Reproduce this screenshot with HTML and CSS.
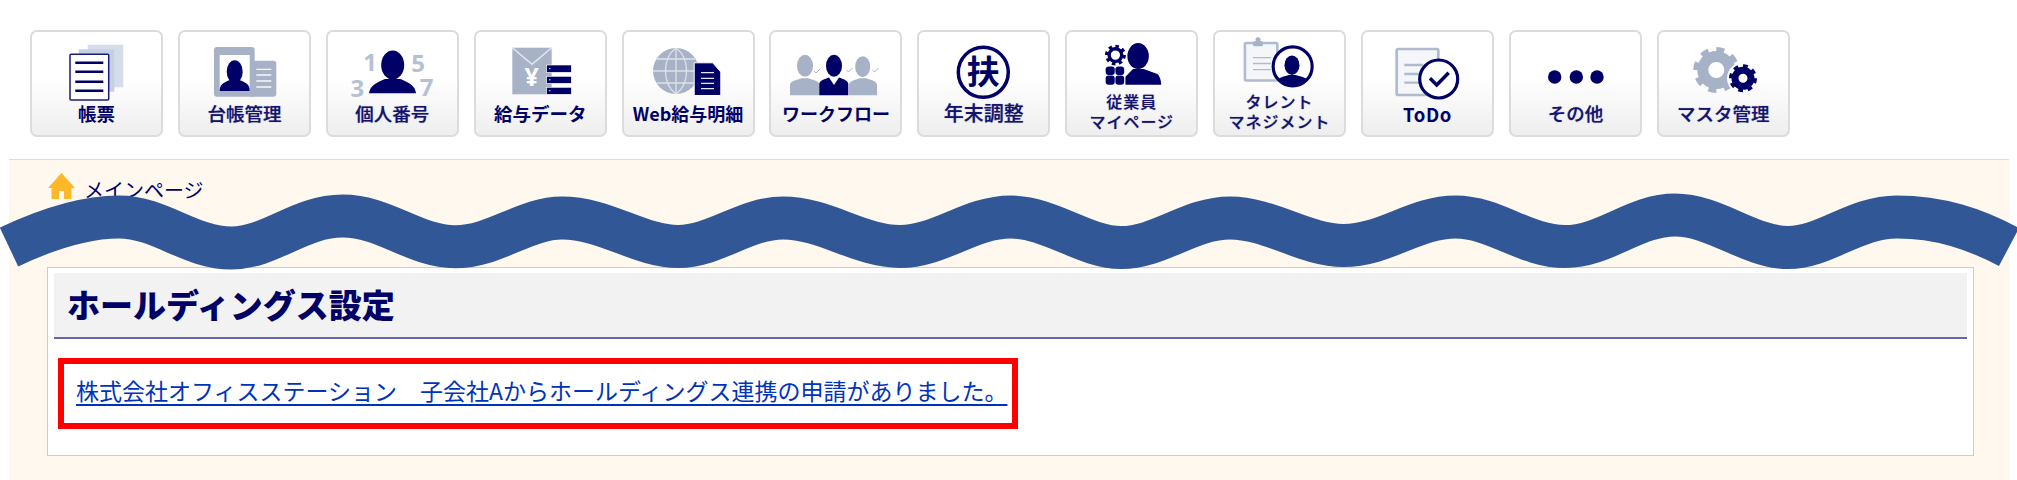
FILE: index.html
```html
<!DOCTYPE html>
<html lang="ja">
<head>
<meta charset="utf-8">
<title>ホールディングス設定</title>
<link rel="stylesheet" href="styles.css">
</head>
<body>
<nav class="toolbar">
  <a class="tile">
    <svg class="icon" viewBox="0 0 129 70">
      <rect class="pale" x="55.7" y="12.7" width="35.6" height="42.6"/>
      <rect class="pale2" x="46.7" y="17.3" width="35.6" height="42.4"/>
      <rect class="sheet" x="38" y="22.3" width="38.7" height="45.7" rx="1"/>
      <path class="rule" d="M43.3 30.7H71.3M43.3 39.7H71.3M43.3 49.7H71.3M43.3 58.7H71.3"/>
    </svg>
    <span class="label heavy">帳票</span>
  </a>
  <a class="tile">
    <svg class="icon" viewBox="0 0 129 70">
      <rect class="grey" x="34" y="15" width="40.7" height="49.7" rx="3"/>
      <path class="grey" d="M70 28.7H93.3a3 3 0 0 1 3 3V61.7a3 3 0 0 1-3 3H70Z"/>
      <rect class="white" x="39.7" y="23" width="30" height="36"/>
      <ellipse class="navy" cx="54.7" cy="39.7" rx="8" ry="11.5"/>
      <path class="navy" d="M39.7 59C39.7 53 42 51 50 48H59.4C67.4 51 69.7 53 69.7 59Z"/>
      <path class="whiteline" d="M76.3 37.3H91.3M76.3 43H91.3M76.3 49H91.3M76.3 55H91.3"/>
    </svg>
    <span class="label">台帳管理</span>
  </a>
  <a class="tile">
    <svg class="icon" viewBox="0 0 129 70">
      <text class="digit" x="42" y="38.7">1</text>
      <text class="digit" x="90" y="40">5</text>
      <text class="digit" x="29.3" y="65">3</text>
      <text class="digit" x="98.7" y="64">7</text>
      <ellipse class="navy" cx="64.7" cy="33" rx="11.5" ry="14.5"/>
      <path class="navy" d="M41 61.3C42 54 47 51.5 57 47H72.4C82.4 51.5 87 54 88 61.3Z"/>
    </svg>
    <span class="label">個人番号</span>
  </a>
  <a class="tile">
    <svg class="icon" viewBox="0 0 129 70">
      <rect class="grey" x="36.3" y="15.7" width="39.4" height="46.6"/>
      <path class="envline" d="M36.3 15.7L56 32.3L75.7 15.7"/>
      <text class="yen" x="55.7" y="54">¥</text>
      <rect class="bar" x="70.7" y="33" width="24.6" height="7.3"/>
      <rect class="bar" x="70.7" y="44.3" width="24.6" height="7"/>
      <rect class="bar" x="70.7" y="55.3" width="24.6" height="7"/>
      <path class="whiteline thin" d="M73 36.6H74.5M73 47.8H74.5M73 58.8H74.5"/>
    </svg>
    <span class="label heavy wide">給与データ</span>
  </a>
  <a class="tile">
    <svg class="icon" viewBox="0 0 129 70">
      <circle class="grey" cx="52" cy="39" r="23"/>
      <path class="globeline" d="M29 39H75M33 27H71M33 51H71M52 16V62M52 16C38 26 38 52 52 62M52 16C66 26 66 52 52 62"/>
      <path class="navy outlined" d="M70.2 30.8H88.7L96.8 40V63.5H70.2Z"/>
      <path class="whiteline" d="M77 40.7H90M77 46.3H90M77 51.3H90M77 56.7H90"/>
    </svg>
    <span class="label small heavy">Web給与明細</span>
  </a>
  <a class="tile">
    <svg class="icon" viewBox="0 0 129 70">
      <ellipse class="grey" cx="34" cy="33.7" rx="8" ry="11"/>
      <path class="grey" d="M19 63.3V53C19 49 26 48 31 46.3H37C42 48 48.500 49 48.500 53V63.3Z"/>
      <ellipse class="grey" cx="91.7" cy="34.7" rx="7.500" ry="10.500"/>
      <path class="grey" d="M78 63.3V53C78 49 84 48 89 46.3H95C100 48 106 49 106 53V63.3Z"/>
      <ellipse class="navy" cx="63" cy="33.7" rx="8" ry="11"/>
      <path class="navy" d="M48.3 63.3V52C48.3 48.5 54 47 58 45.5L63 53L68 45.5C72 47 77.3 48.5 77.3 52V63.3Z"/>
      <path class="tick" d="M43 39L45 41L49 37M75.5 38L77.5 40L81.5 36M101.5 38L103.5 40L107.5 36"/>
    </svg>
    <span class="label small heavy">ワークフロー</span>
  </a>
  <a class="tile">
    <svg class="icon" viewBox="0 0 129 70">
      <circle class="ring" cx="64.3" cy="40.3" r="25"/>
      <text class="seal" x="64.3" y="52">扶</text>
    </svg>
    <span class="label large">年末調整</span>
  </a>
  <a class="tile">
    <svg class="icon short" viewBox="0 0 129 60">
      <circle class="gearring" cx="48" cy="23.7" r="6.5"/>
      <circle class="gearteeth" cx="48" cy="23.7" r="9" pathLength="80" stroke-dasharray="5 5"/>
      <rect class="navy" x="38" y="35.3" width="9.3" height="8.7" rx="3"/>
      <rect class="navy" x="48" y="35.3" width="9" height="8.7" rx="3"/>
      <rect class="navy" x="38" y="44.7" width="9.3" height="9.3" rx="3"/>
      <rect class="navy" x="48" y="44.7" width="9" height="9.3" rx="3"/>
      <ellipse class="navy" cx="71.3" cy="24.7" rx="11" ry="13.3"/>
      <path class="navy" d="M58.3 54V46L66 38H77L91 43C93.5 45 95 50 95 54Z"/>
    </svg>
    <span class="label two">従業員<br>マイページ</span>
  </a>
  <a class="tile">
    <svg class="icon short" viewBox="0 0 129 60">
      <rect class="board" x="29" y="11.3" width="33.3" height="38.4" rx="1.5"/>
      <rect class="grey" x="37.5" y="9.5" width="10" height="5" rx="1"/>
      <circle class="grey" cx="42.5" cy="8" r="2.6"/>
      <path class="boardline" d="M37.3 26.3H55.7M37.3 32.3H55.7M37.3 38.7H55.7"/>
      <circle class="disc" cx="78" cy="35.3" r="20"/>
      <ellipse class="navy" cx="77.3" cy="34" rx="7.7" ry="10"/>
      <path class="navy" d="M63.7 48C66 46 71 45 74 44H81C84 45 89 46 92.300 48C88 52.300 83.500 54.300 78 54.300C72.500 54.300 67.500 52.300 63.700 48Z"/>
    </svg>
    <span class="label two">タレント<br>マネジメント</span>
  </a>
  <a class="tile">
    <svg class="icon" viewBox="0 0 129 70">
      <rect class="board" x="33.700" y="17" width="41.600" height="46" rx="1.500"/>
      <path class="boardline wide" d="M41.300 33H60M41.300 42H60M41.300 50.700H60"/>
      <circle class="disc" cx="75.700" cy="47" r="19"/>
      <path class="check" d="M67 46.300L73.700 53L85.700 40.700"/>
    </svg>
    <span class="label heavy spaced">ToDo</span>
  </a>
  <a class="tile">
    <svg class="icon" viewBox="0 0 129 70">
      <circle class="navy" cx="43.700" cy="45" r="6.700"/>
      <circle class="navy" cx="65.300" cy="45" r="6.700"/>
      <circle class="navy" cx="86" cy="45" r="6.700"/>
    </svg>
    <span class="label">その他</span>
  </a>
  <a class="tile">
    <svg class="icon" viewBox="0 0 129 70">
      <circle class="gearbig" cx="57.300" cy="38" r="13.500"/>
      <circle class="gearbigteeth" cx="57.300" cy="38" r="19.500" pathLength="80" stroke-dasharray="5 5"/>
      <circle class="halo" cx="84" cy="46.300" r="16"/>
      <circle class="gearsmall" cx="84" cy="46.300" r="8"/>
      <circle class="gearsmallteeth" cx="84" cy="46.300" r="12" pathLength="80" stroke-dasharray="5 5"/>
    </svg>
    <span class="label">マスタ管理</span>
  </a>
</nav>

<main class="content">
  <div class="crumb">
    <svg class="home" viewBox="0 0 27 26">
      <path class="homefill" d="M13.500 0L27 15H23.500V26H16V18H11V26H3.500V15H0Z"/>
    </svg>
    <span class="crumbtext">メインページ</span>
  </div>
  <section class="panel">
    <h1 class="title">ホールディングス設定</h1>
    <div class="notice">
      <a class="notice-link" href="#">株式会社オフィスステーション　子会社Aからホールディングス連携の申請がありました。</a>
    </div>
  </section>
</main>

<svg class="wave" viewBox="0 0 2017 480" width="2017" height="480">
  <path class="wavepath" d="M9 247C45 230 85 217 119 217C160 217 190 248 231.500 248C270 248 300 216 342.500 216C385 216 415 246.700 455 246.700C495 246.700 525 218 562 218C605 218 640 246.500 678 246.500C715 246.500 745 218 783 218C825 218 860 246.500 900 246.500C940 246.500 970 217 1010.700 217C1050 217 1085 247.500 1121 247.500C1160 247.500 1190 218 1230 218C1270 218 1305 245.500 1343.400 245.500C1385 245.500 1415 217 1455.500 217C1495 217 1525 246.500 1565 246.500C1605 246.500 1635 215 1675 215C1715 215 1750 247.500 1788 247.500C1825 247.500 1855 217 1896.700 217C1940 217 1975 229 2009 247"/>
</svg>
</body>
</html>
```
FILE: styles.css
```css
* { box-sizing: border-box; }
html, body { margin: 0; padding: 0; background: #fff; }
body {
  position: relative;
  height: 480px;
  overflow: hidden;
  font-family: "Noto Sans CJK JP", "Noto Sans", sans-serif;
  color: #000066;
}

/* toolbar */
.toolbar {
  display: flex;
  gap: 14.9px;
  height: 159px;
  padding: 30px 0 0 30px;
}
.tile {
  display: flex;
  flex-direction: column;
  align-items: center;
  flex: none;
  width: 133px;
  height: 107px;
  border: 2px solid #dcdcdc;
  border-radius: 7px;
  background: linear-gradient(#ffffff 0%, #ffffff 45%, #eeeeee 100%);
}
.icon { display: block; width: 129px; height: 70px; flex: none; overflow: visible; }
.icon.short { height: 58.500px; }
.label {
  display: block;
  font-size: 18.500px;
  line-height: 22px;
  font-weight: 500;
  color: #14146e;
  text-align: center;
  white-space: nowrap;
  text-shadow: 0 0 1px rgba(0, 0, 102, .55);
}
.label.heavy { font-weight: 700; color: #000066; text-shadow: none; }
.label.small { font-size: 18px; }
.label.wide { font-size: 18.500px; }
.label.large { font-size: 20px; }
.label.spaced { letter-spacing: 0.6px; line-height: 24px; }
.label.two { font-size: 16px; line-height: 20px; letter-spacing: 1px; }

/* icon paint */
.navy { fill: #000066; }
.grey { fill: #a8b2c6; }
.white { fill: #fff; }
.pale { fill: #d5dcea; }
.pale2 { fill: #c6d0e3; }
.sheet { fill: #fff; stroke: #1a1a78; stroke-width: 1.500; }
.rule { stroke: #000066; stroke-width: 2.400; fill: none; }
.whiteline { stroke: #fff; stroke-width: 1.300; fill: none; opacity: .9; }
.whiteline.thin { stroke-width: 1; }
.digit { font-family: "Noto Sans", sans-serif; font-size: 24px; font-weight: 700; fill: #b6c0d3; text-anchor: middle; }
.envline { fill: none; stroke: #e4e8f0; stroke-width: 1.500; }
.yen { font-family: "Noto Sans", sans-serif; font-size: 25px; font-weight: 700; fill: #fff; text-anchor: middle; }
.bar { fill: #000066; stroke: #fff; stroke-width: .6; }
.globeline { fill: none; stroke: #dde1ea; stroke-width: 1.300; }
.outlined { stroke: #fff; stroke-width: 1; }
.tick { fill: none; stroke: #a8b2c6; stroke-width: 1; }
.ring { fill: none; stroke: #000066; stroke-width: 3.500; }
.seal { font-size: 33px; font-weight: 700; fill: #000066; text-anchor: middle; }
.gearring { fill: none; stroke: #000066; stroke-width: 3.500; }
.gearteeth { fill: none; stroke: #000066; stroke-width: 3.500; }
.board { fill: #f4f6fa; stroke: #b0bbd0; stroke-width: 2.700; }
.boardline { fill: none; stroke: #b0bbd0; stroke-width: 1.300; }
.boardline.wide { stroke-width: 2.300; }
.disc { fill: #fff; stroke: #000066; stroke-width: 3.200; }
.check { fill: none; stroke: #000066; stroke-width: 3.500; }
.gearbig { fill: none; stroke: #a8b2c6; stroke-width: 11; }
.gearbigteeth { fill: none; stroke: #a8b2c6; stroke-width: 7; }
.halo { fill: #fbfbfb; }
.gearsmall { fill: none; stroke: #000066; stroke-width: 7; }
.gearsmallteeth { fill: none; stroke: #000066; stroke-width: 4; }
.homefill { fill: #fdb827; }

/* content */
.content {
  height: 321px;
  margin: 0 8px 0 9px;
  border-top: 1px solid #dddddd;
  background: #fff8ef;
  overflow: hidden;
}
.crumb {
  display: flex;
  align-items: flex-start;
  gap: 9px;
  height: 107px;
  padding: 13px 0 0 39px;
}
.home { display: block; width: 27px; height: 26px; flex: none; }
.crumbtext { font-size: 20px; line-height: 26px; margin-top: 4px; color: #000066; }

.panel {
  margin: 0 35.500px 0 38px;
  height: 189px;
  padding: 5px 6px 0;
  border: 1px solid #cccccc;
  background: #fff;
}
.title {
  margin: 0;
  height: 66px;
  padding-left: 13px;
  border-bottom: 2px solid #6666aa;
  background: #f2f2f2;
  font-size: 33px;
  line-height: 62px;
  font-weight: 900;
  color: #000066;
}
.notice {
  width: fit-content;
  height: 71px;
  margin: 19px 0 0 4px;
  padding: 0 5px 0 12px;
  border: 6px solid #ff0000;
  line-height: 53px;
}
.notice-link { font-size: 23px; color: #0033bb; text-decoration: underline; text-underline-offset: 4px; }

/* annotation */
.wave { position: absolute; left: 0; top: 0; pointer-events: none; }
.wavepath { fill: none; stroke: #315796; stroke-width: 43; stroke-linecap: butt; }
```
